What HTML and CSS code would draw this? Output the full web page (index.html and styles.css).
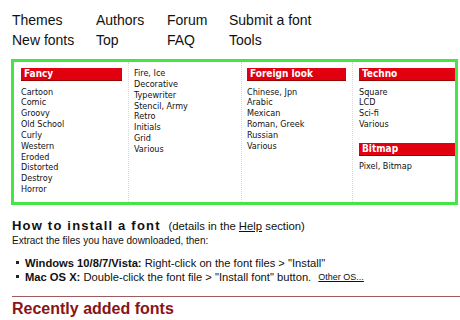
FILE: index.html
```html
<!DOCTYPE html>
<html>
<head>
<meta charset="utf-8">
<link rel="stylesheet" href="styles.css">
</head>
<body>
<nav class="topnav">
  <a>Themes</a><a>Authors</a><a>Forum</a><a>Submit a font</a>
  <a>New fonts</a><a>Top</a><a>FAQ</a><a>Tools</a>
</nav>

<div class="catbox">
  <div class="col c1">
    <div class="cathead">Fancy</div>
    <ul class="cats">
      <li>Cartoon</li><li>Comic</li><li>Groovy</li><li>Old School</li><li>Curly</li>
      <li>Western</li><li>Eroded</li><li>Distorted</li><li>Destroy</li><li>Horror</li>
    </ul>
  </div>
  <div class="col c2">
    <ul class="cats top">
      <li>Fire, Ice</li><li>Decorative</li><li>Typewriter</li><li>Stencil, Army</li>
      <li>Retro</li><li>Initials</li><li>Grid</li><li>Various</li>
    </ul>
  </div>
  <div class="col c3">
    <div class="cathead">Foreign look</div>
    <ul class="cats">
      <li>Chinese, Jpn</li><li>Arabic</li><li>Mexican</li><li>Roman, Greek</li>
      <li>Russian</li><li>Various</li>
    </ul>
  </div>
  <div class="col c4">
    <div class="cathead">Techno</div>
    <ul class="cats">
      <li>Square</li><li>LCD</li><li>Sci-fi</li><li>Various</li>
    </ul>
    <div class="cathead second">Bitmap</div>
    <ul class="cats">
      <li>Pixel, Bitmap</li>
    </ul>
  </div>
</div>

<section class="install">
  <h2 class="install-title">How to install a font <span class="details">(details in the <a class="ulink">Help</a> section)</span></h2>
  <p class="extract">Extract the files you have downloaded, then:</p>
  <ul class="steps">
    <li><b>Windows 10/8/7/Vista:</b> Right-click on the font files &gt; "Install"</li>
    <li><b>Mac OS X:</b> Double-click the font file &gt; "Install font" button. <a class="otheros">Other OS...</a></li>
  </ul>
</section>

<h2 class="recent">Recently added fonts</h2>
</body>
</html>
```
FILE: styles.css
```css
html, body {
  margin: 0;
  padding: 0;
  background: #ffffff;
  color: #111111;
  font-family: "Liberation Sans", Arial, sans-serif;
}

.topnav {
  display: grid;
  grid-template-columns: 84px 71px 62px auto;
  padding: 10px 0 0 12px;
  font-size: 14px;
  line-height: 20px;
}
.topnav a {
  color: #111111;
}

.catbox {
  margin: 9px 0 0 11px;
  width: 441px;
  border: 3px solid #45e545;
  display: grid;
  grid-template-columns: 115px 113px 111px 102px;
  font-family: "DejaVu Sans Condensed", "DejaVu Sans", sans-serif;
  font-stretch: condensed;
  font-size: 9px;
}
.col {
  padding-top: 6px;
  padding-bottom: 7px;
  border-right: 1px dotted #d8d8d8;
}
.c1 { padding-left: 7px; padding-right: 6px; }
.c2 { padding-left: 5px; padding-right: 6px; }
.c3 { padding-left: 5px; padding-right: 6px; }
.c4 { padding-left: 6px; border-right: none; }

.cathead {
  background: #e0000f;
  border-bottom: 1px solid #9a0000;
  color: #ffffff;
  font-weight: bold;
  font-size: 10px;
  line-height: 12px;
  height: 12px;
  padding-left: 3px;
}
.cathead.second {
  margin-top: 13px;
}
.cats {
  list-style: none;
  margin: 5.5px 0 0 0;
  padding: 0;
  line-height: 10.85px;
  color: #111111;
}
.cats.top {
  margin-top: 0;
}

.install {
  padding-left: 12px;
}
.install-title {
  margin: 13px 0 0 0;
  font-size: 13px;
  line-height: 16px;
  font-weight: bold;
  letter-spacing: 1.2px;
  color: #111111;
}
.details {
  font-size: 11.3px;
  font-weight: normal;
  letter-spacing: 0;
  margin-left: 3px;
}
.ulink {
  text-decoration: underline;
}
.extract {
  margin: 1.3px 0 0 0;
  font-size: 10px;
  line-height: 12px;
}
.steps {
  list-style: none;
  margin: 8.7px 0 0 0;
  padding: 0;
  font-size: 11.2px;
  line-height: 14px;
}
.steps li {
  display: flex;
  align-items: center;
  white-space: pre;
}
.steps li::before {
  content: "";
  width: 3px;
  height: 3px;
  background: #222222;
  margin: 0 6px 0 4px;
  flex: none;
}
.otheros {
  font-size: 9px;
  text-decoration: underline;
  margin-left: 4px;
}

.recent {
  margin: 12px 0 0 12px;
  padding-top: 3px;
  border-top: 1px solid #a05a5a;
  font-size: 16px;
  line-height: 18px;
  font-weight: bold;
  color: #8a1414;
}
```
